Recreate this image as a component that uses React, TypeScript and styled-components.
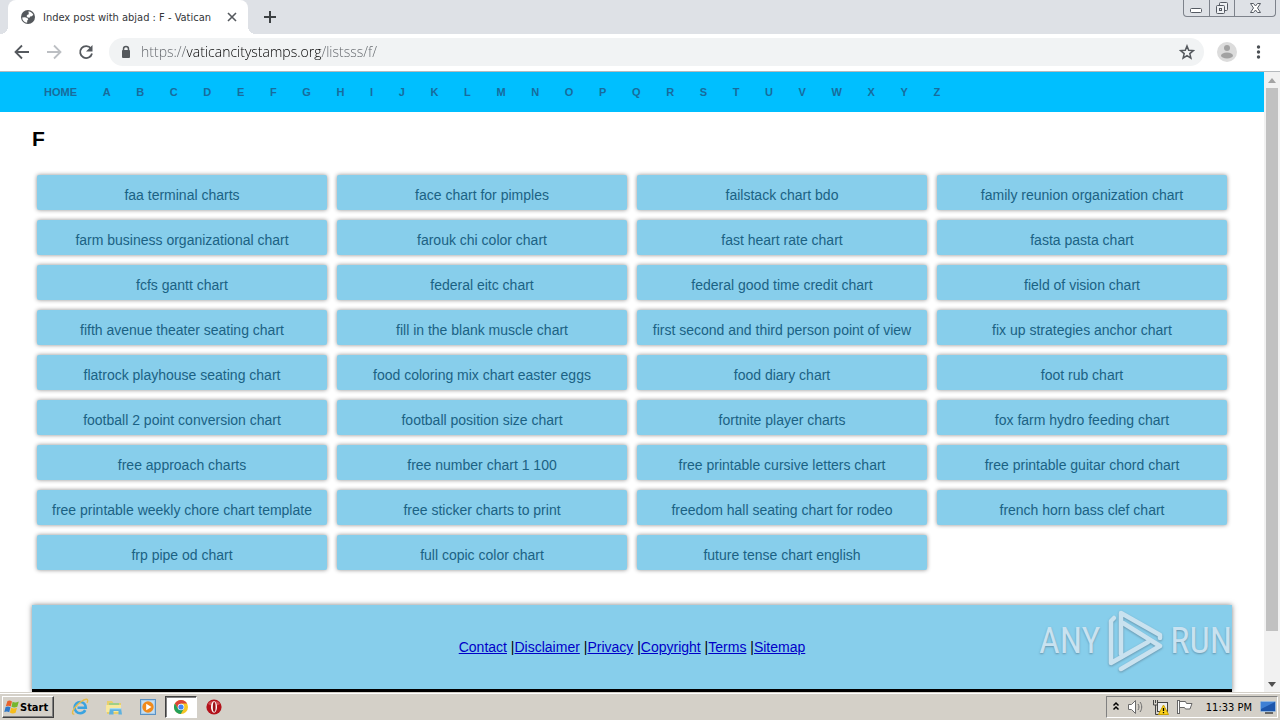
import React from "react";
import styled, { createGlobalStyle, css } from "styled-components";

const ui = `"DejaVu Sans Condensed", "DejaVu Sans", sans-serif`;
const body = `"Liberation Sans", Arial, sans-serif`;

const GlobalStyle = createGlobalStyle`
  * { box-sizing: border-box; }
  body { margin: 0; background: #fff; font-family: ${body}; }
  button { font: inherit; padding: 0; border: 0; background: none; color: inherit; }
  svg { display: block; }
`;

const Desktop = styled.div`
  display: flex;
  flex-direction: column;
  height: 100vh;
  overflow: hidden;
`;

/* Browser chrome */

const TabStrip = styled.header`
  display: flex;
  align-items: flex-start;
  height: 34px;
  padding-left: 8px;
  background: #dee1e6;
  flex: none;
`;

const Tab = styled.div`
  position: relative;
  display: flex;
  align-items: center;
  width: 240px;
  height: 34px;
  padding: 0 10px 0 12px;
  background: #fff;
  border-radius: 8px 8px 0 0;

  &::before,
  &::after {
    content: "";
    position: absolute;
    bottom: 0;
    width: 8px;
    height: 8px;
  }
  &::before {
    left: -8px;
    background: radial-gradient(circle at 0 0, #dee1e6 8px, #fff 8px);
  }
  &::after {
    right: -8px;
    background: radial-gradient(circle at 100% 0, #dee1e6 8px, #fff 8px);
  }
`;

const TabTitle = styled.span`
  flex: 1;
  margin-left: 7px;
  overflow: hidden;
  white-space: nowrap;
  font: 11px ${ui};
  color: #333639;
`;

const NewTab = styled.button`
  display: grid;
  place-items: center;
  width: 28px;
  height: 34px;
  margin-left: 8px;
`;

const WindowControls = styled.div`
  display: flex;
  height: 17px;
  margin: 0 4px 0 auto;
  border: 1px solid #7d828b;
  border-top: 0;
  border-radius: 0 0 4px 4px;
  overflow: hidden;
`;

const WindowButton = styled.button<{ $wide?: boolean }>`
  display: grid;
  place-items: center;
  width: ${(p) => (p.$wide ? 41 : 25)}px;
  height: 16px;
  & + & { border-left: 1px solid #7d828b; }
`;

const Toolbar = styled.div`
  display: flex;
  align-items: center;
  flex: none;
  height: 38px;
  padding: 0 13px 2px 13px;
  background: #fff;
  border-bottom: 1px solid #b5b9bd;
`;

const ToolButton = styled.button`
  display: grid;
  place-items: center;
  width: 18px;
  height: 28px;
  margin-right: 14px;
`;

const AddressBar = styled.div`
  display: flex;
  align-items: center;
  flex: 1;
  height: 28px;
  padding: 0 9px 0 11px;
  background: #f1f3f4;
  border-radius: 14px;
`;

const UrlInput = styled.input`
  flex: 1;
  min-width: 0;
  height: 24px;
  margin-left: 9px;
  padding: 0;
  border: 0;
  outline: 0;
  font: 14px "Open Sans", sans-serif;
  font-weight: 300;
  color: transparent;
  background: linear-gradient(90deg, #5f6368 46px, #000 46px, #000 181px, #5f6368 181px);
  -webkit-background-clip: text;
  background-clip: text;
`;

const Avatar = styled.button`
  display: grid;
  place-items: center;
  width: 20px;
  height: 20px;
  margin: 0 13px;
`;

/* Web page */

const Viewport = styled.div`
  display: flex;
  flex: 1;
  min-height: 0;
`;

const Page = styled.div`
  flex: 1;
  min-width: 0;
  overflow: hidden;
  background: #fff;
`;

const Nav = styled.nav`
  padding: 0 33px;
  background: #00bfff;
  font-size: 13px;
  line-height: 40px;
  white-space: nowrap;
`;

const NavLink = styled.a`
  padding: 0 11px;
  font-size: 11px;
  font-weight: bold;
  color: #196c9c;
  text-decoration: none;
`;

const Content = styled.main`
  padding: 0 32px;
`;

const Heading = styled.h1`
  margin: 15px 0 0;
  font: bold 21px/24px ${body};
  color: #000;
`;

const Tiles = styled.div`
  display: grid;
  grid-template-columns: repeat(4, 1fr);
  gap: 10px;
  padding: 24px 5px 35px;
`;

const Tile = styled.a`
  height: 35px;
  padding: 3px 4px 0;
  overflow: hidden;
  border-radius: 2px;
  background: #87ceeb;
  box-shadow: 0 0 4px rgba(0, 0, 0, 0.45);
  font-size: 14px;
  line-height: 35px;
  text-align: center;
  white-space: nowrap;
  color: #1b6284;
  text-decoration: none;
`;

const Footer = styled.footer`
  position: relative;
  height: 87px;
  padding-top: 31px;
  background: #87ceeb;
  border-bottom: 3px solid #000;
  box-shadow: 0 0 5px rgba(0, 0, 0, 0.5);
  font-size: 14px;
  line-height: 22px;
  text-align: center;
  color: #000;

  a { color: #0000c8; }
`;

const Watermark = styled.div`
  position: absolute;
  top: 3px;
  right: 0;
  display: flex;
  align-items: center;
  gap: 6px;
  height: 66px;
  color: #c9e2f0;
  font: 400 36px "Roboto Condensed", "Liberation Sans Narrow", Roboto, sans-serif;
  text-shadow: 0 1px 2px rgba(80, 110, 130, 0.6);
`;

const WatermarkIcon = styled.svg`
  filter: drop-shadow(0 1px 1px rgba(80, 110, 130, 0.6));
`;

const ScrollBar = styled.div`
  display: flex;
  flex-direction: column;
  align-items: center;
  width: 16px;
  background: #f1f1f1;
`;

const ScrollArrow = styled.button`
  display: grid;
  place-items: center;
  width: 16px;
  height: 16px;
`;

const Thumb = styled.div`
  width: 12px;
  flex: 543;
  background: #c1c1c1;
`;

const TrackRest = styled.div`
  flex: 45;
`;

/* Taskbar */

const Taskbar = styled.footer`
  display: flex;
  align-items: center;
  flex: none;
  height: 28px;
  padding: 2px 2px 0;
  background: #d4d0c8;
  box-shadow: inset 0 1px #d4d0c8, inset 0 2px #fff;
`;

const raised = css`
  border: 1px solid;
  border-color: #fff #404040 #404040 #fff;
  box-shadow: inset -1px -1px #808080;
`;

const sunken = css`
  border: 1px solid;
  border-color: #808080 #fff #fff #808080;
`;

const StartButton = styled.button`
  display: flex;
  align-items: center;
  width: 52px;
  height: 22px;
  padding-left: 1px;
  margin-right: 9px;
  ${raised}
  font: bold 11px ${ui};
  color: #000;
`;

const TaskButton = styled.button<{ $active?: boolean }>`
  display: grid;
  place-items: center;
  width: ${(p) => (p.$active ? 32 : 34)}px;
  height: 22px;
  ${(p) => p.$active && css`
    background: #fff;
    border: 1px solid;
    border-color: #404040 #fff #fff #404040;
    box-shadow: inset 1px 1px #808080;
  `}
`;

const Tray = styled.div`
  display: flex;
  align-items: center;
  gap: 7px;
  height: 22px;
  margin-left: auto;
  padding: 0 1px 0 5px;
  ${sunken}
`;

const Clock = styled.time`
  margin: 0 1px 0 6px;
  font: 11px ${ui};
  color: #000;
`;

const navItems = ["HOME", ..."ABCDEFGHIJKLMNOPQRSTUVWXYZ"];

const charts = [
  "faa terminal charts", "face chart for pimples", "failstack chart bdo", "family reunion organization chart",
  "farm business organizational chart", "farouk chi color chart", "fast heart rate chart", "fasta pasta chart",
  "fcfs gantt chart", "federal eitc chart", "federal good time credit chart", "field of vision chart",
  "fifth avenue theater seating chart", "fill in the blank muscle chart", "first second and third person point of view", "fix up strategies anchor chart",
  "flatrock playhouse seating chart", "food coloring mix chart easter eggs", "food diary chart", "foot rub chart",
  "football 2 point conversion chart", "football position size chart", "fortnite player charts", "fox farm hydro feeding chart",
  "free approach charts", "free number chart 1 100", "free printable cursive letters chart", "free printable guitar chord chart",
  "free printable weekly chore chart template", "free sticker charts to print", "freedom hall seating chart for rodeo", "french horn bass clef chart",
  "frp pipe od chart", "full copic color chart", "future tense chart english",
];

const footerLinks = ["Contact", "Disclaimer", "Privacy", "Copyright", "Terms", "Sitemap"];

const Stroke = ({ d, size, color = "#55595e", width = 1.8 }: { d: string; size: number; color?: string; width?: number }) => (
  <svg width={size} height={size} viewBox={`0 0 ${size} ${size}`} fill="none" stroke={color} strokeWidth={width}>
    <path d={d} />
  </svg>
);

const Globe = () => (
  <svg width="16" height="16" viewBox="0 0 16 16">
    <circle cx="8" cy="8" r="7" fill="#54585c" />
    <path d="M2.200 8.500 5 8.300l2.300.7 1 1.300-1 1.200-.2 2.300C4.200 13.500 2.200 11.300 2.200 8.500ZM8.500 2.200c2.200.2 4 1.700 4.800 3.600l-1.500 1.400-1.700.2-.5 1.300-2-.3L6.500 7l1-1.200 1.300-.6Z" fill="#fff" />
  </svg>
);

const WindowsFlag = () => (
  <svg width="16" height="16" viewBox="0 0 16 16">
    <path d="M3.500 2C5.300 1 6.500 1.500 8 2.500L6.700 7.500c-1.600-1-3-1.100-4.900-.3Z" fill="#e9622b" />
    <path d="M8.600 2.800c1.800 1 3.600 1 6.200-.2L13.300 7.700c-1.900 1-4 1.100-5.800.1Z" fill="#75b62f" />
    <path d="M1.600 8c1.800-.8 3.300-.7 4.900.3l-1.300 4.900C3.700 12.300 2.200 12.300.3 13Z" fill="#2f78c8" />
    <path d="M7.200 8.700c1.800 1 3.900.9 5.800 0l-1.400 5c-2 1-4 .9-5.700-.2Z" fill="#f6bd1c" />
  </svg>
);

const ExplorerE = () => (
  <svg width="18" height="18" viewBox="0 0 18 18" fill="none">
    <path d="M14.200 12.200c-1 2-2.800 3-5 3A5.600 5.600 0 0 1 3.600 9.600C3.600 6.500 6 4 9.200 4s5.500 2.500 5.600 5.800H6.500" stroke="#3aa3e0" strokeWidth="2.600" />
    <path d="M3.300 15.800C1 17 .7 14.200 3.500 10.200 6.600 5.700 12.500 1 15.500 1.300c1.600.2 1.400 2 .5 3.600" stroke="#e7bd4a" strokeWidth="1.400" />
  </svg>
);

const Folder = () => (
  <svg width="18" height="18" viewBox="0 0 18 18">
    <path d="M2 3h5l1.500 2H16v11H2Z" fill="#e9cf6a" />
    <path d="M4 5h10v6H4Z" fill="#9fcf86" />
    <path d="M1 7h15v7H1Z" fill="#f8e89c" />
    <path d="M5 10h11l1 6.500h-3.500V13h-5v3.500H4Z" fill="#5eb1de" />
    <path d="M5 10h11v1.300H5Z" fill="#a8dcf2" />
  </svg>
);

const MediaPlayer = () => (
  <svg width="16" height="16" viewBox="0 0 16 16">
    <rect x=".5" y=".5" width="15" height="15" fill="#a9cdea" stroke="#5a92c4" />
    <rect x="2" y="2" width="12" height="12" fill="#c4def2" />
    <circle cx="8" cy="8" r="5.700" fill="#f08a1c" />
    <path d="M6.200 4.700 11.500 8l-5.300 3.300Z" fill="#fff" />
  </svg>
);

const Chrome = () => (
  <svg width="14" height="14" viewBox="0 0 14 14">
    <circle cx="7" cy="7" r="7" fill="#f6c624" />
    <path d="M.9 3.600A7 7 0 0 1 13.100 3.600H7L4 8.700Z" fill="#db4437" />
    <path d="M.9 3.500A7 7 0 0 0 6.800 14l3.100-5.400L4 8.700Z" fill="#23a05a" />
    <circle cx="7" cy="7" r="3.300" fill="#fff" />
    <circle cx="7" cy="7" r="2.600" fill="#4285f4" />
  </svg>
);

const Opera = () => (
  <svg width="16" height="16" viewBox="0 0 16 16">
    <ellipse cx="8" cy="8" rx="7.600" ry="7.600" fill="#b3121b" />
    <path d="M2 5C3.500 1 12.500 1 14 5c-3 2-9 2-12 0Z" fill="#cf4a50" />
    <ellipse cx="8" cy="8" rx="3" ry="5.800" fill="#fff" />
    <ellipse cx="8.200" cy="8" rx="1.400" ry="4.900" fill="#9c1218" />
  </svg>
);

const PlayMark = () => (
  <WatermarkIcon width="58" height="64" viewBox="0 0 58 64" fill="none" stroke="#c9e2ef" strokeWidth="4.500" strokeLinecap="round" strokeLinejoin="round">
    <path d="M15 45V4l39 22v3" />
    <path d="M17 14 54 37 15 60" />
    <path d="M8 9 5 12v42l37-21" />
  </WatermarkIcon>
);

export default function App() {
  return (
    <Desktop>
      <GlobalStyle />
      <TabStrip>
        <Tab>
          <Globe />
          <TabTitle>Index post with abjad : F - Vatican</TabTitle>
          <button aria-label="Close tab"><Stroke size={12} d="M2 2l8 8M10 2l-8 8" width={1.6} /></button>
        </Tab>
        <NewTab aria-label="New tab"><Stroke size={12} d="M6 0v12M0 6h12" color="#3c4043" width={2} /></NewTab>
        <WindowControls>
          <WindowButton aria-label="Minimize">
            <svg width="13" height="16"><rect x=".5" y="8.500" width="11" height="4" rx="1" fill="#fff" stroke="#555a63" /></svg>
          </WindowButton>
          <WindowButton aria-label="Restore">
            <svg width="14" height="16" fill="#eef0f3" stroke="#555a63"><rect x="4.500" y="2.500" width="8" height="8" rx="1" /><rect x="1.500" y="5.500" width="8" height="8" rx="1" /><rect x="4.500" y="8.500" width="2" height="2" /></svg>
          </WindowButton>
          <WindowButton $wide aria-label="Close window">
            <svg width="13" height="16" viewBox="0 0 13 16"><path d="M1.500 3.500h3l2 2.500 2-2.500h3L8.500 8l3 4.500h-3l-2-2.500-2 2.500h-3L4.500 8Z" fill="#fff" stroke="#555a63" /></svg>
          </WindowButton>
        </WindowControls>
      </TabStrip>
      <Toolbar>
        <ToolButton aria-label="Back"><Stroke size={16} d="M15 8H2.500M8 1.500 1.500 8 8 14.500" /></ToolButton>
        <ToolButton aria-label="Forward"><Stroke size={16} d="M1 8h12.500M8 1.500 14.500 8 8 14.500" color="#bcbfc3" /></ToolButton>
        <ToolButton aria-label="Reload">
          <svg width="16" height="16" viewBox="0 0 16 16"><path d="M13 4.500A6 6 0 1 0 14 9.500" fill="none" stroke="#55595e" strokeWidth="1.800" /><path d="M14.500 1v6.500H8Z" fill="#55595e" /></svg>
        </ToolButton>
        <AddressBar>
          <svg width="12" height="14" viewBox="0 0 12 14"><path d="M3.500 6V4a2.500 2.500 0 0 1 5 0v2" fill="none" stroke="#54585c" strokeWidth="1.500" /><rect x="2" y="5" width="8" height="8" rx="1" fill="#54585c" /></svg>
          <UrlInput aria-label="Address" defaultValue="https://vaticancitystamps.org/listsss/f/" />
          <button aria-label="Bookmark this page">
            <svg width="16" height="16" viewBox="0 0 16 16" fill="none" stroke="#55595e" strokeWidth="1.500"><path d="m8 2 1.700 4.300 4.600.3-3.500 3 1.100 4.500L8 11.600l-3.900 2.500 1.100-4.500-3.500-3 4.600-.3Z" /></svg>
          </button>
        </AddressBar>
        <Avatar aria-label="Profile">
          <svg width="20" height="20" viewBox="0 0 20 20"><circle cx="10" cy="10" r="10" fill="#dcdcdc" /><circle cx="10" cy="6" r="3" fill="#a2a2a2" /><ellipse cx="10" cy="13.500" rx="6" ry="3" fill="#a2a2a2" /></svg>
        </Avatar>
        <button aria-label="Menu">
          <svg width="17" height="16" fill="#4b4f54"><circle cx="8.500" cy="3" r="1.700" /><circle cx="8.500" cy="8" r="1.700" /><circle cx="8.500" cy="13" r="1.700" /></svg>
        </button>
      </Toolbar>
      <Viewport>
        <Page>
          <Nav>
            {navItems.map((item) => (
              <React.Fragment key={item}><NavLink href={`#${item}`}>{item}</NavLink>{" "}</React.Fragment>
            ))}
          </Nav>
          <Content>
            <Heading>F</Heading>
            <Tiles>
              {charts.map((name) => <Tile key={name} href={`#${name.replace(/ /g, "-")}`}>{name}</Tile>)}
            </Tiles>
            <Footer>
              {footerLinks.map((name, i) => (
                <React.Fragment key={name}>{i > 0 && " |"}<a href={`#${name}`}>{name}</a></React.Fragment>
              ))}
              <Watermark>
                <span>ANY</span>
                <PlayMark />
                <span>RUN</span>
              </Watermark>
            </Footer>
          </Content>
        </Page>
        <ScrollBar>
          <ScrollArrow aria-label="Scroll up"><svg width="8" height="5"><path d="M0 5 4 0l4 5Z" fill="#a3a3a3" /></svg></ScrollArrow>
          <Thumb />
          <TrackRest />
          <ScrollArrow aria-label="Scroll down"><svg width="8" height="5"><path d="M0 0h8L4 5Z" fill="#505050" /></svg></ScrollArrow>
        </ScrollBar>
      </Viewport>
      <Taskbar>
        <StartButton><WindowsFlag />Start</StartButton>
        <TaskButton aria-label="Internet Explorer"><ExplorerE /></TaskButton>
        <TaskButton aria-label="File Explorer"><Folder /></TaskButton>
        <TaskButton aria-label="Media Player"><MediaPlayer /></TaskButton>
        <TaskButton $active aria-label="Chrome"><Chrome /></TaskButton>
        <TaskButton aria-label="Opera"><Opera /></TaskButton>
        <Tray>
          <svg width="8" height="14" viewBox="0 0 8 14" fill="none" stroke="#000" strokeWidth="1.500"><path d="m1.500 5.500 2.500-2.500 2.500 2.500M1.500 9.500 4 7l2.500 2.500" /></svg>
          <svg width="18" height="16" viewBox="0 0 18 16" fill="none" stroke="#6b6b6b"><path d="M1.500 5.500h3l4-4v13l-4-4h-3Z" fill="#fff" /><path d="M11 5c1.300 2 1.300 4 0 6M13 3c2.300 3 2.300 7 0 10" /></svg>
          <svg width="17" height="16" viewBox="0 0 17 16"><rect x="5.500" y="3.500" width="10" height="9" fill="#ececec" stroke="#444" /><path d="M1.500 1v5h4V1M3.500 1v3M3.500 6v9.500h5" fill="none" stroke="#444" /><path d="m11.500 6 5 9.500h-10Z" fill="#fbd21c" stroke="#c9a000" /><path d="M11.500 9v3M11.500 13v1.300" stroke="#000" strokeWidth="1.300" /></svg>
          <svg width="17" height="16" viewBox="0 0 17 16" fill="#fff" stroke="#666"><path d="M3.500 2.500h6l1 2h5.500l-2 5.500H9.500L8.500 8.500h-5Z" /><rect x="1.500" y="1.500" width="2" height="13" /></svg>
          <Clock>11:33 PM</Clock>
          <svg width="16" height="14" viewBox="0 0 16 14"><rect x=".5" y="1.500" width="15" height="10" rx="1" fill="#1d56ab" stroke="#93b6dc" /><path d="M1 2h14L1 9Z" fill="#3f80d4" /><path d="M5 12h8v2H5Z" fill="#666" /></svg>
        </Tray>
      </Taskbar>
    </Desktop>
  );
}
